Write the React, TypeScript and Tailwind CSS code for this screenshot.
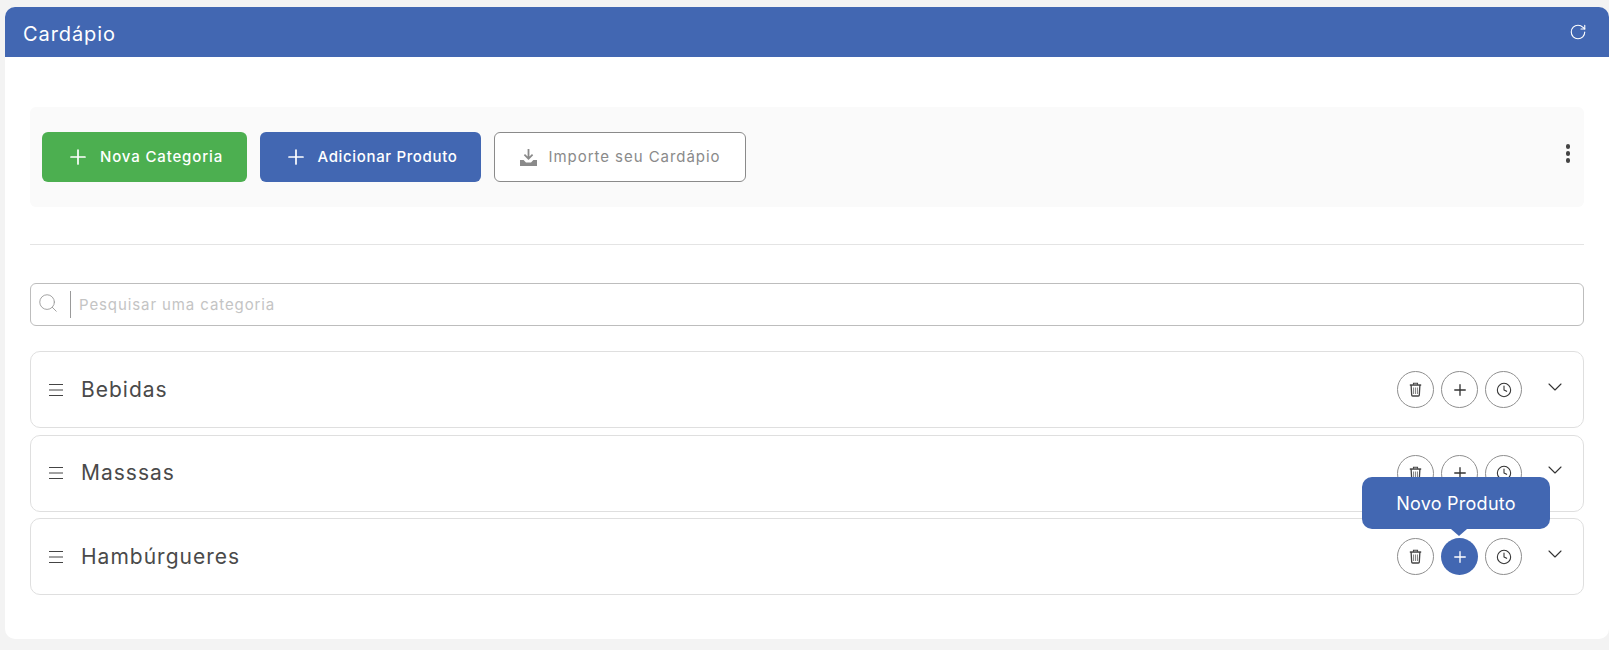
import { Plus, RotateCw, Search, Clock, ChevronDown } from 'lucide-react'

const categories = ['Bebidas', 'Masssas', 'Hambúrgueres']

function TrashIcon() {
  return (
    <svg width="13" height="15" viewBox="0 0 16 18" fill="none" stroke="#444" strokeWidth="1.300">
      <path d="M1 3.500h14" strokeWidth="1.800" />
      <path d="M5.500 3.200V1.400h5v1.800" />
      <path d="M2.600 3.500l.7 12.200c0 .8.5 1.300 1.200 1.300h7c.7 0 1.200-.5 1.200-1.300l.7-12.200" strokeWidth="1.600" />
      <path d="M5.600 6.500v8M8 6.500v8M10.400 6.500v8" stroke="#888" />
    </svg>
  )
}

function ImportIcon() {
  return (
    <svg width="17" height="17" viewBox="0 0 17 17" fill="#8a8a8a">
      <path d="M7.600 0h1.800v7.600l2.600-2.600 1.200 1.200-4.700 4.700-4.700-4.700L5 5l2.600 2.600z" />
      <path d="M0 11h3.600l2.400 2.400h5L13.400 11H17v6H0z" />
    </svg>
  )
}

function HandleIcon() {
  return (
    <svg width="14" height="12" viewBox="0 0 14 12" stroke="#444" strokeWidth="1">
      <path d="M0 .5h14M0 6h14M0 11.500h14" />
    </svg>
  )
}

function CircleButton(props: { children: React.ReactNode; active?: boolean }) {
  return (
    <button
      className={
        props.active
          ? 'flex h-[37px] w-[37px] items-center justify-center rounded-full bg-[#4267b2] text-white'
          : 'flex h-[37px] w-[37px] items-center justify-center rounded-full border border-[#8f8f8f] bg-white text-[#333]'
      }
    >
      {props.children}
    </button>
  )
}

function CategoryRow(props: { name: string; hovered?: boolean }) {
  return (
    <div className="flex h-[77px] items-center rounded-[10px] border border-[#dfdfdf] bg-white pl-[18px] pr-[16px]">
      <HandleIcon />
      <span className="ml-[18px] text-[21px] tracking-[1px] text-[#4a4a4a]">{props.name}</span>
      <div className="ml-auto flex items-center gap-[7px]">
        <CircleButton>
          <TrashIcon />
        </CircleButton>
        <div className="relative">
          <CircleButton active={props.hovered}>
            <Plus size={18} strokeWidth={1.8} />
          </CircleButton>
          {props.hovered && (
            <div className="absolute bottom-[46px] left-[-79px] z-10 flex h-[52px] w-[188px] items-center justify-center rounded-[10px] bg-[#4267b2] text-[18px] tracking-[0.25px] text-white">
              Novo Produto
              <span className="absolute -bottom-[7px] left-[97px] h-0 w-0 -translate-x-1/2 border-x-[8px] border-t-[7px] border-x-transparent border-t-[#4267b2]" />
            </div>
          )}
        </div>
        <CircleButton>
          <Clock size={16} strokeWidth={1.6} />
        </CircleButton>
      </div>
      <ChevronDown size={24} strokeWidth={1.1} className="mb-[6px] ml-[21px] text-[#333]" />
    </div>
  )
}

export default function App() {
  return (
    <div className="min-h-[650px] bg-[#f3f3f3] pb-[11px] pl-[5px] pt-[7px] font-['Inter','Liberation_Sans',sans-serif]">
      <div className="h-[632px] rounded-[10px] bg-white">
        <div className="flex h-[50px] items-center justify-between rounded-t-[10px] bg-[#4267b2] pl-[18px] pr-[22px] text-white">
          <span className="pt-[3px] text-[20px] tracking-[0.9px]">Cardápio</span>
          <RotateCw size={18} strokeWidth={1.5} />
        </div>

        <div className="pl-[25px] pr-[25px] pt-[50px]">
          <div className="flex h-[100px] items-center rounded-[6px] bg-[#fafafa] pl-[12px] pr-[14px]">
            <div className="flex gap-[13px]">
              <button className="flex h-[50px] w-[205px] items-center justify-center gap-[10px] rounded-[6px] bg-[#4caf50] text-[15px] font-medium tracking-[0.85px] text-white">
                <Plus size={24} strokeWidth={1.7} />
                Nova Categoria
              </button>
              <button className="flex h-[50px] w-[221px] items-center justify-center gap-[10px] rounded-[6px] bg-[#4267b2] text-[15px] font-medium tracking-[0.65px] text-white">
                <Plus size={24} strokeWidth={1.7} />
                Adicionar Produto
              </button>
              <button className="flex h-[50px] w-[252px] items-center justify-center gap-[12px] rounded-[6px] border border-[#8a8a8a] bg-white text-[15px] tracking-[0.95px] text-[#8a8a8a]">
                <ImportIcon />
                Importe seu Cardápio
              </button>
            </div>
            <div className="ml-auto flex flex-col gap-[2.500px] pb-[7px]">
              <span className="h-[4.500px] w-[4.500px] rounded-full bg-[#444]" />
              <span className="h-[4.500px] w-[4.500px] rounded-full bg-[#444]" />
              <span className="h-[4.500px] w-[4.500px] rounded-full bg-[#444]" />
            </div>
          </div>

          <div className="mt-[37px] h-px bg-[#e4e4e4]" />

          <div className="mt-[38px] flex h-[43px] items-center rounded-[6px] border border-[#bdbdbd] pl-[6px]">
            <Search size={22} strokeWidth={1} className="mb-[4px] text-[#9a9a9a]" />
            <span className="ml-[11px] h-[27px] w-px bg-[#9a9a9a]" />
            <input
              placeholder="Pesquisar uma categoria"
              className="ml-[8px] flex-1 bg-transparent pt-[2px] text-[15px] tracking-[0.9px] outline-none placeholder:text-[#c4c4c4]"
            />
          </div>

          <div className="mt-[25px] flex flex-col gap-[6.500px]">
            {categories.map((c) => (
              <CategoryRow key={c} name={c} hovered={c === 'Hambúrgueres'} />
            ))}
          </div>
        </div>
      </div>
    </div>
  )
}
